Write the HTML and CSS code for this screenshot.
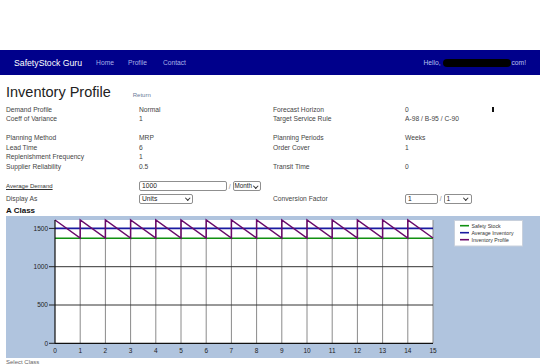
FILE: index.html
```html
<!DOCTYPE html>
<html lang="en">
<head>
    <meta charset="UTF-8">
    <title>Inventory Profile</title>
    <link rel="stylesheet" href="styles.css">
</head>
<body>

<div class="navbar">
    <span class="brand">SafetyStock Guru</span>
    <a class="nav-link" href="#">Home</a>
    <a class="nav-link" href="#">Profile</a>
    <a class="nav-link" href="#">Contact</a>
    <span class="hello">Hello, <span class="redacted"></span>com!</span>
</div>

<div class="content">
    <div class="title-row">
        <h1>Inventory Profile</h1>
        <a class="return" href="#">Return</a>
    </div>

    <div class="info">
        <span>Demand Profile</span><span>Normal</span><span>Forecast Horizon</span><span>0<i class="mark"></i></span>
        <span>Coeff of Variance</span><span>1</span><span>Target Service Rule</span><span>A-98 / B-95 / C-90</span>
        <span></span><span></span><span></span><span></span>
        <span>Planning Method</span><span>MRP</span><span>Planning Periods</span><span>Weeks</span>
        <span>Lead Time</span><span>6</span><span>Order Cover</span><span>1</span>
        <span>Replenishment Frequency</span><span>1</span><span></span><span></span>
        <span>Supplier Reliability</span><span>0.5</span><span>Transit Time</span><span>0</span>
    </div>

    <div class="form">
        <a class="underline" href="#">Average Demand</a>
        <span class="field"><span class="input wide">1000</span><span class="slash">/</span><span class="select month">Month<b></b></span></span>
        <span></span>
        <span></span>
        <span>Display As</span>
        <span class="field"><span class="select units">Units<b></b></span></span>
        <span>Conversion Factor</span>
        <span class="field"><span class="input narrow">1</span><span class="slash">/</span><span class="select one">1<b></b></span></span>
    </div>

    <h2>A Class</h2>
</div>

<div class="chart">
    <svg width="534" height="142" viewBox="0 0 534 142">
        <rect x="49" y="4" width="378" height="123.3" fill="#fff"/>
        <g stroke="#8a8a8a" stroke-width="1">
            <path d="M74.2 4V127M99.4 4V127M124.6 4V127M149.8 4V127M175 4V127M200.2 4V127M225.4 4V127M250.6 4V127M275.8 4V127M301 4V127M326.2 4V127M351.4 4V127M376.6 4V127M401.8 4V127M427 4V127"/>
        </g>
        <g stroke="#333" stroke-width="1">
            <path d="M49 89H427M49 50.7H427"/>
        </g>
        <path d="M49 22.3H427" stroke="#109010" stroke-width="1.6"/>
        <path d="M49 12.4H427" stroke="#1a1aa0" stroke-width="1.6"/>
        <path d="M49 4L74.2 22V4L99.4 22V4L124.6 22V4L149.8 22V4L175 22V4L200.2 22V4L225.4 22V4L250.6 22V4L275.8 22V4L301 22V4L326.2 22V4L351.4 22V4L376.6 22V4L401.8 22V4L427 22" fill="none" stroke="#6a0a6a" stroke-width="1.5"/>
        <path d="M49 4V127.3H427" fill="none" stroke="#111" stroke-width="1.2"/>
        <g stroke="#222" stroke-width="1">
            <path d="M43 127.3H49M43 89H49M43 50.7H49M43 12.4H49"/>
        </g>
        <g class="ylab" text-anchor="end">
            <text x="42" y="129.6">0</text>
            <text x="42" y="91.3">500</text>
            <text x="42" y="53">1000</text>
            <text x="42" y="14.7">1500</text>
        </g>
        <g class="xlab" text-anchor="middle">
            <text x="49" y="136.5">0</text>
            <text x="74.2" y="136.5">1</text>
            <text x="99.4" y="136.5">2</text>
            <text x="124.6" y="136.5">3</text>
            <text x="149.8" y="136.5">4</text>
            <text x="175" y="136.5">5</text>
            <text x="200.2" y="136.5">6</text>
            <text x="225.4" y="136.5">7</text>
            <text x="250.6" y="136.5">8</text>
            <text x="275.8" y="136.5">9</text>
            <text x="301" y="136.5">10</text>
            <text x="326.2" y="136.5">11</text>
            <text x="351.4" y="136.5">12</text>
            <text x="376.6" y="136.5">13</text>
            <text x="401.8" y="136.5">14</text>
            <text x="427" y="136.5">15</text>
        </g>
        <rect x="448.5" y="4.5" width="68" height="25.5" fill="#fff" stroke="#c8d0dc"/>
        <path d="M454 9.7H463" stroke="#109010" stroke-width="1.6"/>
        <path d="M454 16.7H463" stroke="#1a1aa0" stroke-width="1.6"/>
        <path d="M454 23.7H463" stroke="#6a0a6a" stroke-width="1.6"/>
        <g class="legend">
            <text x="465.5" y="11.6">Safety Stock</text>
            <text x="465.5" y="18.6">Average Inventory</text>
            <text x="465.5" y="25.6">Inventory Profile</text>
        </g>
    </svg>
</div>

<div class="footer-text">Select Class</div>

</body>
</html>
```

FILE: styles.css
```css
body {
    margin: 0;
    font-family: "Liberation Sans", Arial, sans-serif;
    font-size: 6.7px;
    color: #444;
    background-color: #fff;
    overflow: hidden;
}
.navbar {
    margin-top: 50px;
    height: 25px;
    background-color: #00008b;
    display: flex;
    align-items: center;
    padding: 0 14px;
}
.brand {
    color: #fff;
    font-size: 8.7px;
    margin-right: 14px;
}
.nav-link {
    color: #a8b0e8;
    text-decoration: none;
    font-size: 6.7px;
    margin-right: 14px;
}
.nav-link:last-of-type {
    margin-left: 2px;
}
.hello {
    margin-left: auto;
    color: #b8c0f0;
    font-size: 6.7px;
    display: flex;
    align-items: center;
}
.redacted {
    display: inline-block;
    width: 68px;
    height: 8px;
    background-color: #000;
    border-radius: 4px;
    margin: 0 1px 0 2px;
}
.content {
    padding: 0 6px;
}
.title-row {
    display: flex;
    align-items: baseline;
    height: 20.5px;
    padding-top: 9px;
}
.title-row h1 {
    margin: 0 22px 0 0;
    font-weight: normal;
    font-size: 14.5px;
    line-height: 17px;
    color: #222;
    white-space: nowrap;
}
.return {
    color: #6a7a98;
    text-decoration: none;
    font-size: 6px;
}
.info {
    display: grid;
    grid-template-columns: 133px 134px 132px auto;
    grid-auto-rows: 9.55px;
    line-height: 9.55px;
    white-space: nowrap;
}
.mark {
    display: inline-block;
    width: 2px;
    height: 5px;
    background-color: #111;
    margin-left: 83px;
    vertical-align: middle;
}
.form {
    display: grid;
    grid-template-columns: 133px 134px 132px auto;
    grid-auto-rows: 12.5px;
    align-items: center;
    margin-top: 8.8px;
}
.underline {
    color: #333;
    font-size: 6px;
}
.field {
    display: flex;
    align-items: center;
}
.slash {
    color: #888;
    width: 5.5px;
    text-align: center;
}
.input,
.select {
    box-sizing: border-box;
    height: 10px;
    line-height: 8px;
    border: 1px solid #8f8f8f;
    border-radius: 2px;
    padding: 0 2px;
    color: #222;
    background-color: #fff;
}
.input {
    display: inline-block;
}
.select {
    display: inline-flex;
    justify-content: space-between;
    align-items: center;
    white-space: nowrap;
}
.select b {
    flex: none;
    width: 2.5px;
    height: 2.5px;
    border-right: 1px solid #333;
    border-bottom: 1px solid #333;
    transform: rotate(45deg);
    margin: -2px 1px 0 0;
}
.wide {
    width: 88px;
}
.month {
    width: 28px;
    padding: 0 1px;
    font-size: 6.3px;
}
.units {
    width: 54px;
}
.narrow {
    width: 33px;
}
.one {
    width: 28px;
}
h2 {
    margin: 0.8px 0 0;
    font-size: 8px;
    font-weight: bold;
    color: #111;
    line-height: 10px;
}
.chart {
    margin: 0 0 0 6px;
    height: 142px;
    background-color: #b0c4de;
}
.chart svg {
    display: block;
}
.ylab text,
.xlab text {
    font-family: "Liberation Sans", Arial, sans-serif;
    font-size: 6.5px;
    fill: #222;
}
.legend text {
    font-family: "Liberation Sans", Arial, sans-serif;
    font-size: 5.2px;
    fill: #333;
}
.footer-text {
    margin: 1px 0 0 6px;
    font-size: 6px;
    color: #666;
}
```
